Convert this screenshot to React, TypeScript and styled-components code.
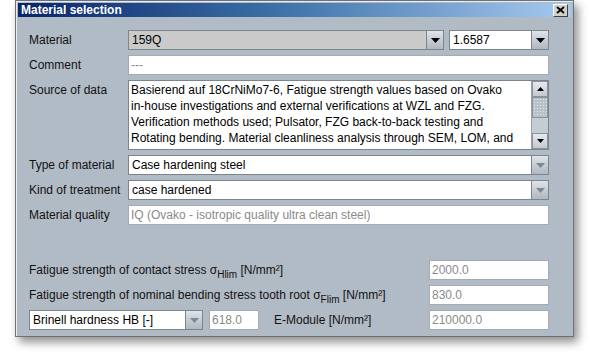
import React, { FC } from "react";
import styled, { createGlobalStyle } from "styled-components";

const GlobalStyle = createGlobalStyle`
	html, body {
		margin: 0;
		padding: 0;
		background: #ffffff;
	}
	body {
		font-family: "Liberation Sans", Arial, sans-serif;
		font-size: 12px;
		color: #000;
	}
`;

// window frame
const Page = styled.div`
	width: 590px;
	height: 352px;
	padding: 0 0 0 15px;
	box-sizing: border-box;
`;

const Window = styled.div`
	width: 559px;
	height: 337px;
	box-sizing: border-box;
	border: 1px solid #6a737c;
	padding: 2px;
	background: #b1bbc5;
	box-shadow: 4px 5px 9px rgba(0, 0, 0, 0.45), inset 1px 1px 0 #e8ecf0;
	display: flex;
	flex-direction: column;
`;

const TitleBar = styled.div`
	height: 18px;
	display: flex;
	align-items: center;
	justify-content: space-between;
	padding: 0 3px 0 3px;
	background: linear-gradient(90deg, #0a246a 0%, #3a6ea5 45%, #a6caf0 100%);
	color: #fff;
	font-weight: bold;
	font-size: 12px;
`;

const CloseButton = styled.div`
	width: 15px;
	height: 13px;
	box-sizing: border-box;
	background: #d4d0c8;
	border: 1px solid;
	border-color: #fff #404040 #404040 #fff;
	display: flex;
	align-items: center;
	justify-content: center;
`;

const Body = styled.div`
	flex: 1;
	padding: 13px 22px 0 11px;
	display: flex;
	flex-direction: column;
`;

const Row = styled.div<{ $height?: number; $gap?: number }>`
	display: flex;
	align-items: flex-start;
	height: ${(p) => p.$height ?? 20}px;
	margin-bottom: ${(p) => p.$gap ?? 5}px;
`;

const Label = styled.div<{ $width?: number }>`
	width: ${(p) => (p.$width ? `${p.$width}px` : "auto")};
	flex: ${(p) => (p.$width ? "none" : "1")};
	height: 20px;
	line-height: 20px;
	white-space: nowrap;
	color: #111;
`;

const Sub = styled.sub`
	font-size: 10px;
	vertical-align: -4px;
	line-height: 0;
`;

const Field = styled.div<{ $width?: number; $disabled?: boolean }>`
	width: ${(p) => (p.$width ? `${p.$width}px` : "auto")};
	flex: ${(p) => (p.$width ? "none" : "1")};
	height: 20px;
	box-sizing: border-box;
	background: #fff;
	border: 1px solid ${(p) => (p.$disabled ? "#a3abb4" : "#7c848c")};
	color: ${(p) => (p.$disabled ? "#8a8a8a" : "#000")};
	padding: 0 2px;
	line-height: 18px;
	white-space: nowrap;
	overflow: hidden;
`;

const Combo = styled.div<{ $width?: number; $gray?: boolean }>`
	width: ${(p) => (p.$width ? `${p.$width}px` : "auto")};
	flex: ${(p) => (p.$width ? "none" : "1")};
	height: 20px;
	box-sizing: border-box;
	display: flex;
	border: 1px solid #7c848c;
	background: ${(p) => (p.$gray ? "#cacaca" : "#fff")};
`;

const ComboText = styled.div`
	flex: 1;
	padding: 0 3px;
	line-height: 18px;
	white-space: nowrap;
	overflow: hidden;
`;

const ArrowButton = styled.div`
	width: 17px;
	height: 18px;
	box-sizing: border-box;
	border-left: 1px solid #7c848c;
	background: linear-gradient(180deg, #dfe4e9 0%, #c3cad2 55%, #b0b8c1 100%);
	display: flex;
	align-items: center;
	justify-content: center;
`;

const TextArea = styled.div`
	flex: 1;
	height: 70px;
	box-sizing: border-box;
	border: 1px solid #7c848c;
	background: #fff;
	display: flex;
`;

const AreaText = styled.div`
	flex: 1;
	padding: 1px 2px;
	line-height: 16px;
	overflow: hidden;
`;

const ScrollBar = styled.div`
	width: 16px;
	display: flex;
	flex-direction: column;
	background: #c4ccd4;
	border-left: 1px solid #9aa2aa;
`;

const ScrollButton = styled.div`
	height: 16px;
	box-sizing: border-box;
	border: 1px solid #8a929a;
	background: linear-gradient(180deg, #e6eaee 0%, #c2c9d0 100%);
	display: flex;
	align-items: center;
	justify-content: center;
`;

const Thumb = styled.div`
	height: 21px;
	box-sizing: border-box;
	border: 1px solid #8a929a;
	background-color: #b8c0c8;
	background-image: radial-gradient(#e8ecf0 0.8px, transparent 0.9px);
	background-size: 3px 3px;
`;

const Track = styled.div`
	flex: 1;
`;

const Spacer = styled.div<{ $size: number }>`
	width: ${(p) => p.$size}px;
	height: ${(p) => p.$size}px;
	flex: none;
`;

const Arrow: FC<{ dim?: boolean; up?: boolean; small?: boolean }> = ({ dim, up, small }) => (
	<svg width={small ? 7 : 9} height={small ? 4 : 5} viewBox="0 0 9 5">
		<polygon points={up ? "0,5 9,5 4.5,0" : "0,0 9,0 4.5,5"} fill={dim ? "#7f878f" : "#000"} />
	</svg>
);

const App: FC = () => {
	return (
		<Page>
			<GlobalStyle />
			<Window>
				<TitleBar>
					<span>Material selection</span>
					<CloseButton>
						<svg width="9" height="8" viewBox="0 0 9 8">
							<path d="M1 1 L8 7 M8 1 L1 7" stroke="#000" strokeWidth="1.8" />
						</svg>
					</CloseButton>
				</TitleBar>
				<Body>
					<Row>
						<Label $width={99}>Material</Label>
						<Combo $gray>
							<ComboText>159Q</ComboText>
							<ArrowButton>
								<Arrow />
							</ArrowButton>
						</Combo>
						<Spacer $size={5} />
						<Combo $width={100}>
							<ComboText>1.6587</ComboText>
							<ArrowButton>
								<Arrow />
							</ArrowButton>
						</Combo>
					</Row>
					<Row>
						<Label $width={99}>Comment</Label>
						<Field $disabled>---</Field>
					</Row>
					<Row $height={70}>
						<Label $width={99}>Source of data</Label>
						<TextArea>
							<AreaText>
								Basierend auf 18CrNiMo7-6, Fatigue strength values based on Ovako
								<br />
								in-house investigations and external verifications at WZL and FZG.
								<br />
								Verification methods used; Pulsator, FZG back-to-back testing and
								<br />
								Rotating bending. Material cleanliness analysis through SEM, LOM, and
							</AreaText>
							<ScrollBar>
								<ScrollButton>
									<Arrow up small />
								</ScrollButton>
								<Thumb />
								<Track />
								<ScrollButton>
									<Arrow small />
								</ScrollButton>
							</ScrollBar>
						</TextArea>
					</Row>
					<Row>
						<Label $width={99}>Type of material</Label>
						<Combo>
							<ComboText>Case hardening steel</ComboText>
							<ArrowButton>
								<Arrow dim />
							</ArrowButton>
						</Combo>
					</Row>
					<Row>
						<Label $width={99}>Kind of treatment</Label>
						<Combo>
							<ComboText>case hardened</ComboText>
							<ArrowButton>
								<Arrow dim />
							</ArrowButton>
						</Combo>
					</Row>
					<Row $gap={35}>
						<Label $width={99}>Material quality</Label>
						<Field $disabled>IQ (Ovako - isotropic quality ultra clean steel)</Field>
					</Row>
					<Row>
						<Label>
							Fatigue strength of contact stress σ<Sub>Hlim</Sub> [N/mm²]
						</Label>
						<Field $width={120} $disabled>
							2000.0
						</Field>
					</Row>
					<Row>
						<Label>
							Fatigue strength of nominal bending stress tooth root σ<Sub>Flim</Sub> [N/mm²]
						</Label>
						<Field $width={120} $disabled>
							830.0
						</Field>
					</Row>
					<Row>
						<Combo $width={174}>
							<ComboText>Brinell hardness HB [-]</ComboText>
							<ArrowButton>
								<Arrow dim />
							</ArrowButton>
						</Combo>
						<Spacer $size={6} />
						<Field $width={50} $disabled>
							618.0
						</Field>
						<Spacer $size={15} />
						<Label>E-Module [N/mm²]</Label>
						<Field $width={120} $disabled>
							210000.0
						</Field>
					</Row>
				</Body>
			</Window>
		</Page>
	);
};

export default App;
